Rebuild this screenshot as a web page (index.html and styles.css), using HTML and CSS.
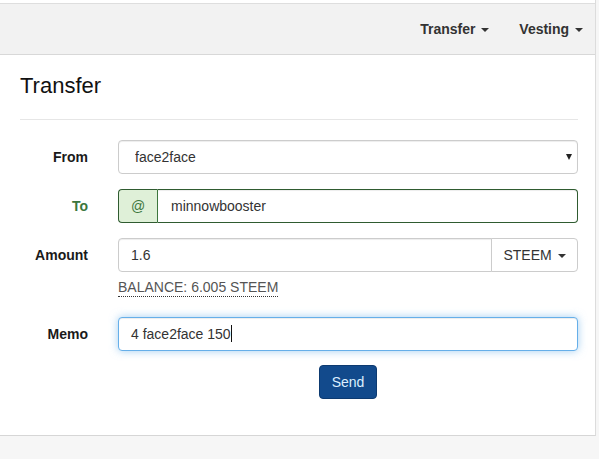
FILE: index.html
```html
<!DOCTYPE html>
<html>
<head>
<meta charset="utf-8">
<link rel="stylesheet" href="styles.css">
</head>
<body>
<div class="page">
  <nav class="navbar">
    <ul class="nav">
      <li><a href="#">Transfer <span class="caret"></span></a></li>
      <li><a href="#">Vesting <span class="caret"></span></a></li>
    </ul>
  </nav>
  <main class="content">
    <h3 class="title">Transfer</h3>
    <hr class="rule">
    <form class="form">
      <div class="group">
        <label class="label">From</label>
        <div class="control select-wrap">
          <select class="field select"><option>face2face</option></select>
          <span class="select-caret"></span>
        </div>
      </div>
      <div class="group success">
        <label class="label">To</label>
        <div class="control input-group">
          <span class="addon">@</span>
          <input class="field grouped" type="text" value="minnowbooster">
        </div>
      </div>
      <div class="group amount-group">
        <label class="label">Amount</label>
        <div class="control">
          <div class="input-group">
            <input class="field amount" type="text" value="1.6">
            <button type="button" class="unit">STEEM <span class="caret"></span></button>
          </div>
          <div class="help"><span class="balance">BALANCE: 6.005 STEEM</span></div>
        </div>
      </div>
      <div class="group">
        <label class="label">Memo</label>
        <div class="control">
          <div class="field focused">4 face2face 150<span class="cursor"></span></div>
        </div>
      </div>
      <div class="actions">
        <button type="button" class="send">Send</button>
      </div>
    </form>
  </main>
</div>
</body>
</html>
```

FILE: styles.css
```css
html, body {
  margin: 0;
  padding: 0;
}
body {
  background: #f6f6f6;
  font-family: "Liberation Sans", Arial, sans-serif;
  font-size: 14px;
  color: #333;
}
.page {
  width: 595px;
  background: #fff;
  border-right: 1px solid #dcdcdc;
  border-bottom: 1px solid #d6d6d6;
  padding-top: 3px;
}
.navbar {
  height: 50px;
  background: #f2f2f2;
  border-top: 1px solid #dedede;
  border-bottom: 1px solid #d8d8d8;
  display: flex;
  justify-content: flex-end;
}
.nav {
  list-style: none;
  margin: 0;
  padding: 0;
  display: flex;
}
.nav a {
  display: block;
  line-height: 50px;
  padding: 0 15px;
  font-weight: bold;
  color: #333;
  text-decoration: none;
}
.nav li:last-child a {
  padding-right: 12px;
}
.caret {
  display: inline-block;
  width: 0;
  height: 0;
  margin-left: 2px;
  vertical-align: middle;
  border-top: 4px solid;
  border-left: 4px solid transparent;
  border-right: 4px solid transparent;
}
.content {
  padding: 19px 17px 0 20px;
}
.title {
  margin: 0;
  font-size: 22px;
  line-height: 24px;
  font-weight: normal;
  color: #111;
}
.rule {
  margin: 21px 0 20px;
  border: 0;
  border-top: 1px solid #e6e6e6;
}
.form {
  margin: 0;
  padding-bottom: 36px;
}
.group {
  display: flex;
  align-items: flex-start;
  margin-bottom: 15px;
}
.label {
  width: 68px;
  margin-right: 30px;
  text-align: right;
  font-weight: bold;
  line-height: 34px;
  color: #1a1a1a;
}
.control {
  flex: 1;
  min-width: 0;
}
.field {
  box-sizing: border-box;
  display: block;
  width: 100%;
  height: 34px;
  padding: 6px 12px;
  font-family: inherit;
  font-size: 14px;
  line-height: 20px;
  color: #333;
  background: #fff;
  border: 1px solid #ccc;
  border-radius: 4px;
  box-shadow: inset 0 1px 1px rgba(0,0,0,.075);
  outline: none;
  margin: 0;
}
.select-wrap {
  position: relative;
}
.select {
  -webkit-appearance: none;
  appearance: none;
  padding-left: 16px;
}
.select-caret {
  position: absolute;
  right: 6px;
  top: 14px;
  width: 0;
  height: 0;
  border-top: 6px solid #222;
  border-left: 3.5px solid transparent;
  border-right: 3.5px solid transparent;
}
.input-group {
  display: flex;
}
.addon {
  box-sizing: border-box;
  width: 40px;
  height: 34px;
  line-height: 32px;
  text-align: center;
  background: #dff0d8;
  color: #3c763d;
  border: 1px solid #2f5b30;
  border-right: 1px solid #3c763d;
  border-radius: 4px 0 0 4px;
}
.success .label {
  color: #3c763d;
}
.grouped {
  flex: 1;
  border-color: #2f5b30;
  border-left: 0;
  border-radius: 0 4px 4px 0;
  padding-left: 13px;
}
.amount {
  flex: 1;
  border-radius: 4px 0 0 4px;
}
.unit {
  box-sizing: border-box;
  height: 34px;
  width: 87px;
  margin-left: -1px;
  padding: 6px 10px;
  font-family: inherit;
  font-size: 14px;
  color: #333;
  background: #fff;
  border: 1px solid #ccc;
  border-radius: 0 4px 4px 0;
}
.amount-group {
  margin-bottom: 21px;
}
.help {
  margin-top: 6px;
  line-height: 18px;
  color: #555;
}
.balance {
  border-bottom: 1px dotted #333;
  padding-bottom: 1px;
}
.focused {
  border-color: #66afe9;
  box-shadow: inset 0 1px 1px rgba(0,0,0,.075), 0 0 8px rgba(102,175,233,.6);
}
.cursor {
  display: inline-block;
  width: 1px;
  height: 17px;
  background: #111;
  vertical-align: -3px;
}
.actions {
  margin-top: -1px;
  padding-left: 98px;
  display: flex;
  justify-content: center;
}
.send {
  box-sizing: border-box;
  height: 34px;
  padding: 6px 12px;
  font-family: inherit;
  font-size: 14px;
  color: #dcefff;
  background: #124a8c;
  border: 1px solid #0d3a70;
  border-radius: 4px;
}
```
